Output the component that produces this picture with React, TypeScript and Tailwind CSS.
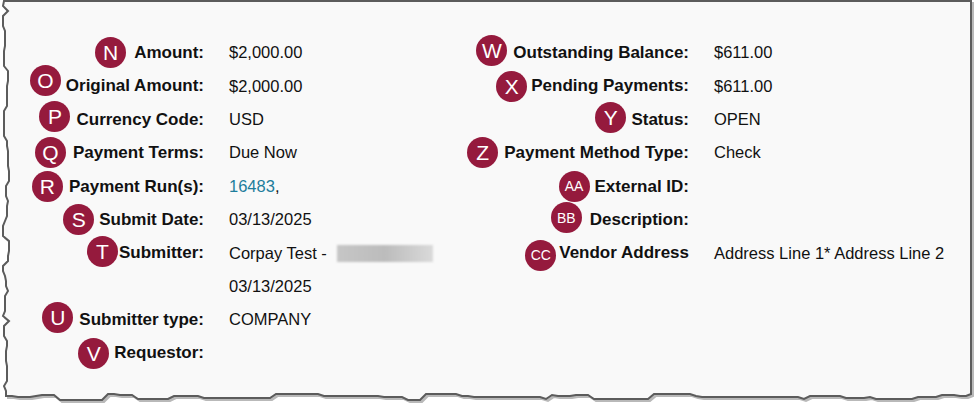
import type { ReactNode } from "react"

type Row = {
  badge?: string
  label?: string
  value?: ReactNode
  gap?: string
  nudge?: string
}

const leftRows: Row[] = [
  { badge: "N", label: "Amount:", value: "$2,000.00", gap: "mr-[8px]" },
  { badge: "O", label: "Original Amount:", value: "$2,000.00", gap: "mr-[5px]", nudge: "-translate-y-[6px]" },
  { badge: "P", label: "Currency Code:", value: "USD", gap: "mr-[6px]", nudge: "-translate-y-[3px]" },
  { badge: "Q", label: "Payment Terms:", value: "Due Now", gap: "mr-[7px]" },
  {
    badge: "R",
    label: "Payment Run(s):",
    value: (
      <>
        <span className="text-[#1d7d9c]">16483</span>,
      </>
    ),
    gap: "mr-[6px]",
  },
  { badge: "S", label: "Submit Date:", value: "03/13/2025", gap: "mr-[5px]" },
  {
    badge: "T",
    label: "Submitter:",
    value: (
      <span className="flex items-center">
        Corpay Test -
        <span className="ml-[10px] inline-block h-[17px] w-[96px] bg-gradient-to-r from-[#c6c6c6] via-[#bcbcbc] to-[#dadada] blur-[1px]" />
      </span>
    ),
    gap: "mr-[1px]",
    nudge: "-translate-y-[2px]",
  },
  { value: "03/13/2025" },
  { badge: "U", label: "Submitter type:", value: "COMPANY", gap: "mr-[6px]", nudge: "-translate-y-[2px]" },
  { badge: "V", label: "Requestor:", gap: "mr-[5px]" },
]

const rightRows: Row[] = [
  { badge: "W", label: "Outstanding Balance:", value: "$611.00", gap: "mr-[6px]", nudge: "-translate-y-[2px]" },
  { badge: "X", label: "Pending Payments:", value: "$611.00", gap: "mr-[4px]" },
  { badge: "Y", label: "Status:", value: "OPEN", gap: "mr-[5px]", nudge: "-translate-y-[2px]" },
  { badge: "Z", label: "Payment Method Type:", value: "Check", gap: "mr-[6px]" },
  { badge: "AA", label: "External ID:", gap: "mr-[5px]" },
  { badge: "BB", label: "Description:", gap: "mr-[8px]", nudge: "-translate-y-[2px]" },
  { badge: "CC", label: "Vendor Address", value: "Address Line 1* Address Line 2", gap: "mr-[3px]", nudge: "translate-y-[2px]" },
]

function Badge({ text, gap, nudge }: { text: string; gap?: string; nudge?: string }) {
  return (
    <span
      className={`flex h-[31px] w-[31px] shrink-0 items-center justify-center rounded-full bg-[#951a3d] leading-none text-white ${
        text.length > 1 ? "text-[14px]" : "text-[21px]"
      } ${gap ?? ""} ${nudge ?? ""}`}
    >
      {text}
    </span>
  )
}

function FieldGrid({ rows, cols }: { rows: Row[]; cols: string }) {
  return (
    <div className={`grid auto-rows-[33.4px] gap-x-[25px] ${cols}`}>
      {rows.map((row, i) => (
        <div key={i} className="contents">
          <div className="flex items-center justify-end">
            {row.badge && <Badge text={row.badge} gap={row.gap} nudge={row.nudge} />}
            {row.label && (
              <span className="text-[17px] font-bold whitespace-nowrap text-[#111]">{row.label}</span>
            )}
          </div>
          <div className="flex items-center whitespace-nowrap text-[16.5px] text-[#111]">{row.value}</div>
        </div>
      ))}
    </div>
  )
}

// torn-paper frame around the screenshot
function rng(seed: number) {
  let s = seed
  return () => {
    s = (s * 16807) % 2147483647
    return (s - 1) / 2147483646
  }
}

function tornPath() {
  const r = rng(42)
  const pts: string[] = ["M4 1", "L971 1", "L971 394"]
  let y = 396
  for (let x = 966; x > 10; x -= 6) {
    if (r() > 0.7) y = 393 + Math.round(r() * 7)
    pts.push(`L${x} ${y}`)
  }
  let x = 6
  for (let yy = 396; yy > 4; yy -= 5) {
    if (r() > 0.5) x = 3 + Math.round(r() * 6)
    pts.push(`L${x} ${yy}`)
  }
  pts.push("Z")
  return pts.join(" ")
}

const framePath = tornPath()

export default function App() {
  return (
    <div className="relative h-[405px] w-[975px] overflow-hidden bg-white font-['Liberation_Sans',Arial,sans-serif]">
      <svg className="absolute inset-0" width="975" height="405" viewBox="0 0 975 405">
        <path d={framePath} transform="translate(2 2)" fill="#b9b9b9" stroke="#b9b9b9" strokeWidth="2" />
        <path d={framePath} fill="#f9f9f9" stroke="#5c5c5c" strokeWidth="2" />
      </svg>

      <div className="relative flex pt-[36px]">
        <div className="w-[441px]">
          <FieldGrid rows={leftRows} cols="grid-cols-[204px_1fr]" />
        </div>
        <div>
          <FieldGrid rows={rightRows} cols="grid-cols-[248px_1fr]" />
        </div>
      </div>
    </div>
  )
}
